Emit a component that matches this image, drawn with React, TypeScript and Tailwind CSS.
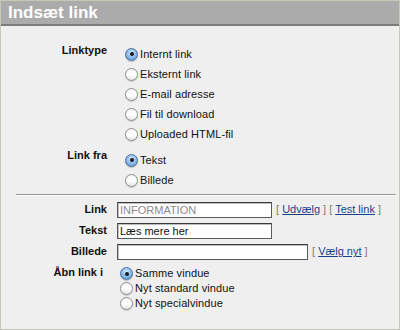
import type { ReactNode } from 'react';

const font = { fontFamily: '"Liberation Sans", Arial, sans-serif' };

function Radio({ checked, label }: { checked?: boolean; label: string }) {
  return (
    <div className="flex items-center gap-[2px]">
      {checked ? (
        <span className="w-[13px] h-[13px] rounded-full border border-[#4a6f9c] bg-[radial-gradient(circle_at_50%_35%,#d6ebff,#7fb2e6_60%,#4f8fd0)] flex items-center justify-center shadow-[0_1px_1px_rgba(0,0,0,0.2)]">
          <span className="w-[4px] h-[4px] rounded-full bg-[#1a1a1a]" />
        </span>
      ) : (
        <span className="w-[13px] h-[13px] rounded-full border border-[#8c8c8c] bg-[linear-gradient(#f4f4f4,#ffffff_50%,#e6e6e6)] shadow-[0_1px_1px_rgba(0,0,0,0.15)]" />
      )}
      <span className="text-[11px] leading-[13px] text-[#111] tracking-[0.1px]">{label}</span>
    </div>
  );
}

function Field({ label, children, extra }: { label: string; children: ReactNode; extra?: ReactNode }) {
  return (
    <div className="flex items-center h-[21px]">
      <div className="w-[106px] text-right text-[11px] font-bold text-[#111] leading-[13px]">{label}</div>
      <div className="ml-[10px] flex items-center gap-[4px]">
        {children}
        {extra}
      </div>
    </div>
  );
}

function Input({ width, value, muted }: { width: string; value: string; muted?: boolean }) {
  return (
    <div
      className={`${width} h-[16px] bg-white border border-[#5a5a5a] border-t-[#3a3a3a] shadow-[inset_1px_1px_0_#bdbdbd] px-[2px] text-[11px] leading-[14px] ${
        muted ? 'text-[#8a8a8a]' : 'text-[#111]'
      }`}
    >
      {value}
    </div>
  );
}

function Link({ children }: { children: ReactNode }) {
  return <span className="text-[#1c3f8c] underline underline-offset-1">{children}</span>;
}

export default function App() {
  return (
    <div style={font} className="w-[400px] h-[330px] border border-[#c5c8b8] bg-[#efefef] flex flex-col overflow-hidden">
      <div className="h-[25px] bg-[#ababab] border-b-2 border-[#7c7c7c] px-[7px] flex items-center">
        <span className="text-white font-bold text-[17px] leading-[18px]">Indsæt link</span>
      </div>

      <div className="mt-[18px] grid grid-cols-[106px_1fr] gap-y-[6px]">
        <div className="text-right text-[11px] font-bold text-[#111] leading-[13px]">Linktype</div>
        <div className="pl-[18px] flex flex-col">
          {['Internt link', 'Eksternt link', 'E-mail adresse', 'Fil til download', 'Uploaded HTML-fil'].map((l, i) => (
            <div key={l} className="h-[20px] flex items-center">
              <Radio checked={i === 0} label={l} />
            </div>
          ))}
        </div>
        <div className="text-right text-[11px] font-bold text-[#111] leading-[13px] -mt-px">Link fra</div>
        <div className="pl-[18px] flex flex-col">
          {['Tekst', 'Billede'].map((l, i) => (
            <div key={l} className="h-[20px] flex items-center">
              <Radio checked={i === 0} label={l} />
            </div>
          ))}
        </div>
      </div>

      <div className="mt-[4px] ml-[15px] mr-[3px] border-t border-[#9a9a9a] border-b border-b-white" />

      <div className="mt-[3px] flex flex-col text-[11px]">
        <Field
          label="Link"
          extra={
            <span className="text-[#333] whitespace-nowrap">
              <span className="text-[#8a7a6a]">[</span> <Link>Udvælg</Link> <span className="text-[#8a7a6a]">]</span>{' '}
              <span className="text-[#8a7a6a]">[</span> <Link>Test link</Link> <span className="text-[#8a7a6a]">]</span>
            </span>
          }
        >
          <Input width="w-[155px]" value="INFORMATION" muted />
        </Field>
        <Field label="Tekst">
          <Input width="w-[155px]" value="Læs mere her" />
        </Field>
        <Field
          label="Billede"
          extra={
            <span className="text-[#333] whitespace-nowrap">
              <span className="text-[#8a7a6a]">[</span> <Link>Vælg nyt</Link> <span className="text-[#8a7a6a]">]</span>
            </span>
          }
        >
          <Input width="w-[191px]" value="" />
        </Field>

        <div className="mt-[4px] flex">
          <div className="w-[106px] pr-[4px] text-right text-[11px] font-bold text-[#111] leading-[13px]">Åbn link i</div>
          <div className="pl-[13px] flex flex-col">
            {['Samme vindue', 'Nyt standard vindue', 'Nyt specialvindue'].map((l, i) => (
              <div key={l} className="h-[15px] flex items-center">
                <Radio checked={i === 0} label={l} />
              </div>
            ))}
          </div>
        </div>
      </div>
    </div>
  );
}
